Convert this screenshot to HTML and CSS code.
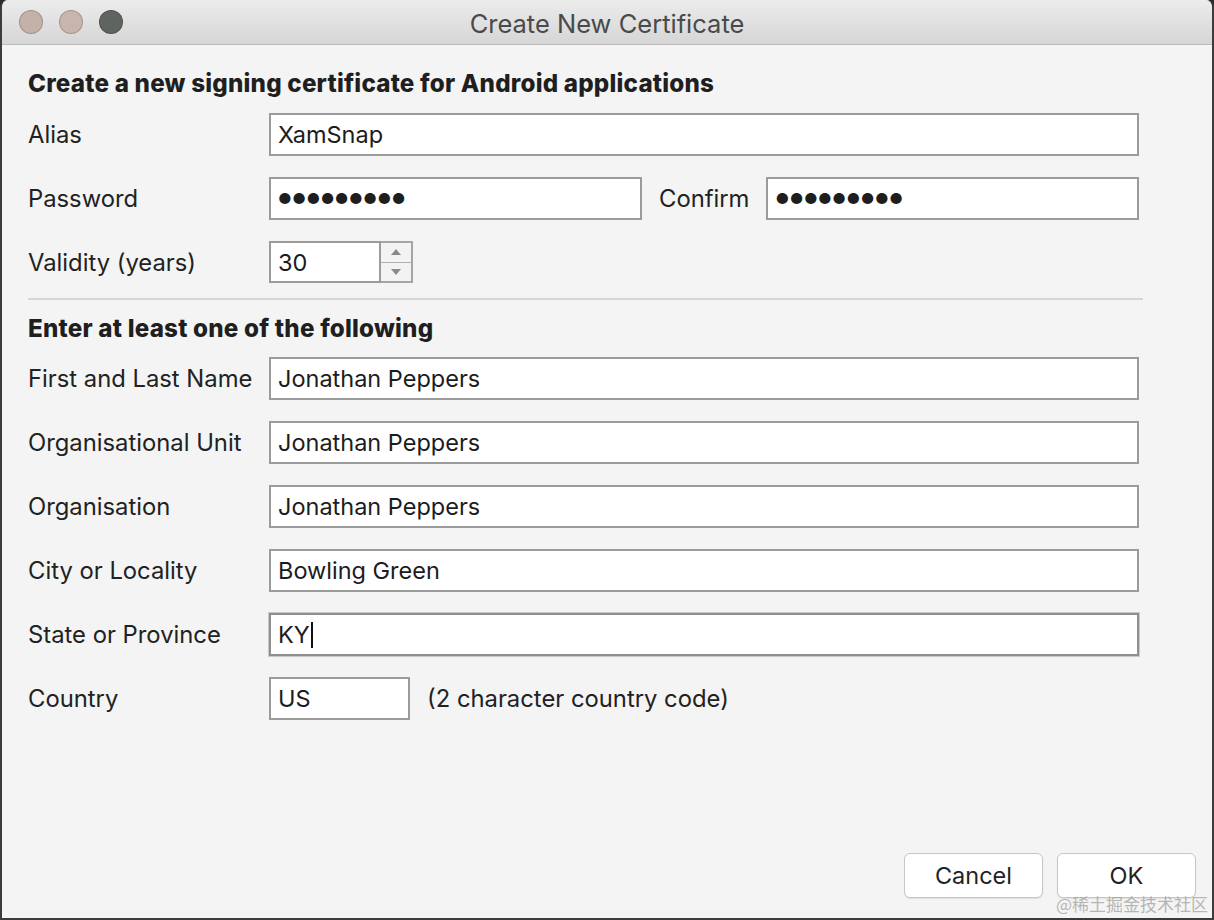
FILE: index.html
```html
<!DOCTYPE html>
<html>
  <head>
    <title>Create New Certificate</title>
    <link rel="stylesheet" href="styles.css">
  </head>
  <body>
    <div class="window">
      <div class="titlebar">
        <div class="lights">
          <span class="light close"></span>
          <span class="light min"></span>
          <span class="light zoom"></span>
        </div>
        <div class="title">Create New Certificate</div>
      </div>

      <div class="content">
        <h2 class="section-title">Create a new signing certificate for Android applications</h2>

        <div class="row">
          <label class="label">Alias</label>
          <div class="field grow">XamSnap</div>
        </div>

        <div class="row">
          <label class="label">Password</label>
          <div class="field half dots">●●●●●●●●●</div>
          <label class="label confirm">Confirm</label>
          <div class="field grow dots">●●●●●●●●●</div>
        </div>

        <div class="row row-short">
          <label class="label">Validity (years)</label>
          <div class="spin">
            <div class="field spin-value">30</div>
            <div class="spin-buttons">
              <span class="spin-btn"><svg width="10" height="6" viewBox="0 0 10 6"><path d="M0 6 L5 0 L10 6 Z" fill="#8a8a8a"/></svg></span>
              <span class="spin-btn"><svg width="10" height="6" viewBox="0 0 10 6"><path d="M0 0 L5 6 L10 0 Z" fill="#8a8a8a"/></svg></span>
            </div>
          </div>
        </div>

        <hr class="divider">

        <h2 class="section-title second">Enter at least one of the following</h2>

        <div class="row">
          <label class="label">First and Last Name</label>
          <div class="field grow">Jonathan Peppers</div>
        </div>
        <div class="row">
          <label class="label">Organisational Unit</label>
          <div class="field grow">Jonathan Peppers</div>
        </div>
        <div class="row">
          <label class="label">Organisation</label>
          <div class="field grow">Jonathan Peppers</div>
        </div>
        <div class="row">
          <label class="label">City or Locality</label>
          <div class="field grow">Bowling Green</div>
        </div>
        <div class="row">
          <label class="label">State or Province</label>
          <div class="field grow focused">KY<span class="caret"></span></div>
        </div>
        <div class="row">
          <label class="label">Country</label>
          <div class="field country">US</div>
          <span class="hint">(2 character country code)</span>
        </div>
      </div>

      <div class="footer">
        <button class="btn">Cancel</button>
        <button class="btn">OK</button>
      </div>
      <div class="watermark">@稀土掘金技术社区</div>
    </div>
  </body>
</html>
```

FILE: styles.css
```css
body {
  margin: 0;
  background-color: #2b2b2b;
  font-family: Inter, "Noto Sans", sans-serif;
  color: #222;
}

.window {
  position: relative;
  width: 1214px;
  height: 920px;
  box-sizing: border-box;
  border: 2px solid #3c3c3c;
  border-top: none;
  border-radius: 8px 8px 0 0;
  background-color: #f4f4f4;
  display: flex;
  flex-direction: column;
  overflow: hidden;
}

/* Title bar */
.titlebar {
  position: relative;
  height: 45px;
  flex-shrink: 0;
  box-sizing: border-box;
  background: linear-gradient(#ececec, #d6d6d6);
  border-bottom: 1px solid #b9b9b9;
  display: flex;
  align-items: center;
  justify-content: center;
}
.lights {
  position: absolute;
  left: 17px;
  top: 10px;
  display: flex;
  gap: 16px;
}
.light {
  width: 24px;
  height: 24px;
  border-radius: 50%;
  box-sizing: border-box;
  border: 1px solid rgba(0,0,0,0.18);
}
.light.close { background-color: #c4b1a8; }
.light.min { background-color: #c8b5ab; }
.light.zoom { background-color: #5f6461; }
.title {
  font-size: 25.5px;
  color: #4a4a4a;
  margin-top: 2px;
}

/* Form */
.content {
  padding: 24px 73px 0 26px;
  flex: 1;
}
.section-title {
  margin: 0 0 14px;
  font-size: 24.2px;
  font-weight: 800;
  letter-spacing: 0.2px;
  color: #1f1f1f;
  line-height: 30px;
}
.section-title.second {
  margin-bottom: 13px;
}
.row {
  display: flex;
  align-items: center;
  height: 43px;
  margin-bottom: 21px;
}
.row-short {
  height: 42px;
  margin-bottom: 15px;
}
.label {
  width: 241px;
  flex-shrink: 0;
  font-size: 23.8px;
  color: #222;
}
.label.confirm {
  width: auto;
  margin: 0 17px;
}
.field {
  height: 43px;
  box-sizing: border-box;
  border: 2px solid #9b9b9b;
  background-color: #fff;
  padding: 0 7px;
  font-size: 23.5px;
  line-height: 39px;
  color: #1c1c1c;
  display: flex;
  align-items: center;
}
.field.grow { flex: 1; }
.field.half { width: 373px; }
.field.dots {
  font-size: 15px;
  letter-spacing: 0.5px;
  color: #1e1e1e;
}
.field.country { width: 141px; }
.field.focused {
  border-color: #8e8e8e;
  box-shadow: 0 0 0 1px #c9c9c9;
}
.caret {
  display: inline-block;
  width: 2px;
  height: 26px;
  background-color: #111;
  margin-left: 1px;
}
.hint {
  margin-left: 17px;
  font-size: 23.8px;
  color: #222;
}

.spin {
  display: flex;
  height: 42px;
}
.spin-value {
  width: 112px;
  height: 42px;
}
.spin-buttons {
  width: 32px;
  box-sizing: border-box;
  border: 2px solid #a5a5a5;
  border-left: none;
  display: flex;
  flex-direction: column;
  background-color: #f3f3f3;
}
.spin-btn {
  flex: 1;
  display: flex;
  align-items: center;
  justify-content: center;
}
.spin-btn + .spin-btn {
  border-top: 1px solid #b0b0b0;
}

.divider {
  margin: 0 0 14px 0;
  width: 1115px;
  border: none;
  border-top: 2px solid #d6d6d6;
}

/* Buttons */
.footer {
  display: flex;
  justify-content: flex-end;
  gap: 14px;
  padding: 0 16px 20px 0;
}
.btn {
  width: 139px;
  height: 45px;
  border: 1px solid #c6c6c6;
  border-radius: 6px;
  background-color: #fff;
  font-family: Inter, "Noto Sans", sans-serif;
  font-size: 23.5px;
  color: #222;
  box-shadow: 0 1px 1px rgba(0,0,0,0.08);
}

.watermark {
  position: absolute;
  right: 4px;
  bottom: 2px;
  font-family: "Noto Sans CJK SC", sans-serif;
  font-size: 17px;
  color: rgba(160,160,160,0.75);
}
```
